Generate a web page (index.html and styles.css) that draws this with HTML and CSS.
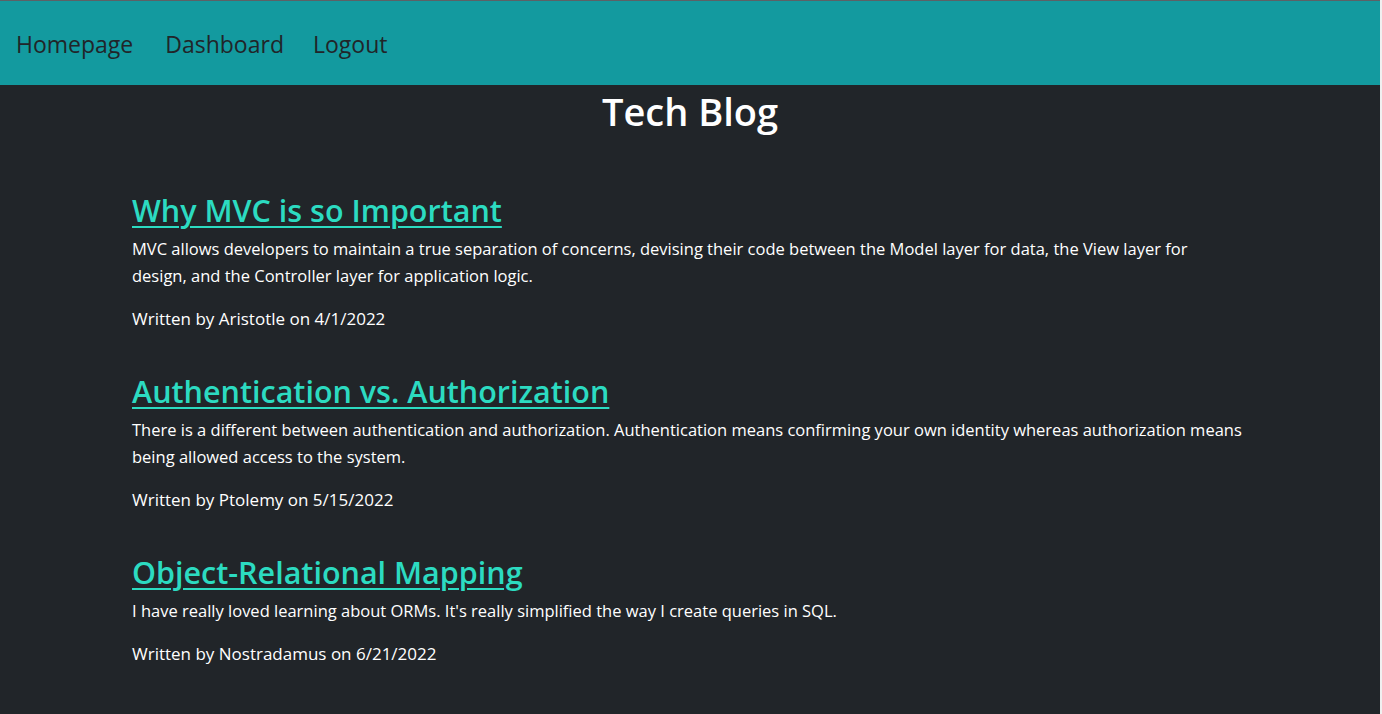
FILE: index.html
```html
<!DOCTYPE html>
<html lang="en">
<head>
<meta charset="utf-8">
<title>Tech Blog</title>
<link rel="stylesheet" href="styles.css">
</head>
<body>
<header class="topbar">
  <nav class="nav">
    <a class="nav-link" href="#">Homepage</a>
    <a class="nav-link" href="#">Dashboard</a>
    <a class="nav-link" href="#">Logout</a>
  </nav>
</header>
<main class="container">
  <h1 class="site-title">Tech Blog</h1>
  <section class="posts">
    <article class="post">
      <h2 class="post-title"><a href="#">Why MVC is so Important</a></h2>
      <p class="post-body">MVC allows developers to maintain a true separation of concerns, devising their code between the Model layer for data, the View layer for design, and the Controller layer for application logic.</p>
      <p class="post-meta">Written by Aristotle on 4/1/2022</p>
    </article>
    <article class="post">
      <h2 class="post-title"><a href="#">Authentication vs. Authorization</a></h2>
      <p class="post-body">There is a different between authentication and authorization. Authentication means confirming your own identity whereas authorization means being allowed access to the system.</p>
      <p class="post-meta">Written by Ptolemy on 5/15/2022</p>
    </article>
    <article class="post">
      <h2 class="post-title"><a href="#">Object-Relational Mapping</a></h2>
      <p class="post-body">I have really loved learning about ORMs. It's really simplified the way I create queries in SQL.</p>
      <p class="post-meta">Written by Nostradamus on 6/21/2022</p>
    </article>
  </section>
</main>
</body>
</html>
```
FILE: styles.css
```css
* { box-sizing: border-box; }
html { background: #f0f0f0; }
body {
  margin: 0;
  margin-right: 2px;
  min-height: 714px;
  background: #212529;
  color: #ffffff;
  font-family: "Open Sans", "Noto Sans", sans-serif;
  font-size: 17px;
  line-height: 27px;
}
.topbar {
  background: #139a9f;
  border-top: 1px solid #5c6166;
  height: 85px;
  display: flex;
  align-items: center;
  padding: 0 16px;
}
.nav {
  display: flex;
  gap: 32px;
}
.nav-link {
  color: #212529;
  text-decoration: none;
  font-size: 23px;
  line-height: 30px;
  padding-top: 2px;
}
.nav-link:nth-child(3) { margin-left: -3px; }
.container {
  max-width: 1140px;
  margin: 0 auto;
  padding: 0 12px;
}
.site-title {
  margin: 2px 0 56px;
  text-align: center;
  font-size: 38px;
  line-height: 48px;
  font-weight: 600;
}
.post { margin-bottom: 40px; }
.post-title {
  margin: 0 0 6px;
  font-size: 30.5px;
  line-height: 38px;
  font-weight: 600;
}
.post-title a {
  color: #2cdbc1;
  text-decoration: underline;
  text-decoration-thickness: 2px;
  text-underline-offset: 4px;
}
.post-body {
  margin: 0 0 16px;
  max-width: 1112px;
  font-size: 16.5px;
}
.post-meta { margin: 0 0 16px; }
```
